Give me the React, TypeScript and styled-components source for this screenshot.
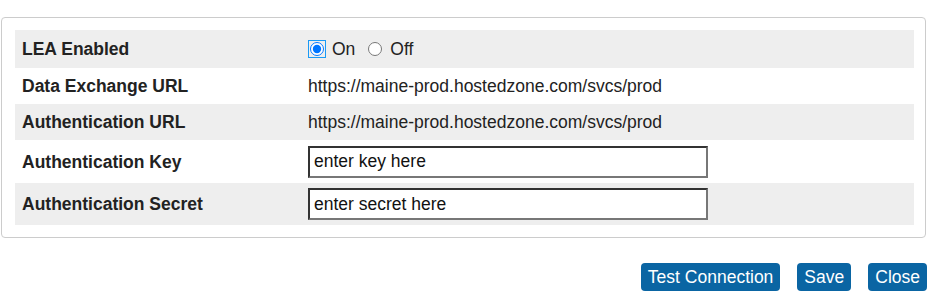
import React from "react";
import styled, { createGlobalStyle } from "styled-components";

const Global = createGlobalStyle`
  html, body { margin: 0; padding: 0; background: #ffffff; }
  body { font-family: "Liberation Sans", Arial, sans-serif; color: #222; }
`;

const Page = styled.div`
  padding: 17px 14px 0 1px;
  width: 925px;
`;

const Panel = styled.div`
  border: 1px solid #cccccc;
  border-radius: 4px;
  padding: 12px 11px 12px 13px;
`;

const Table = styled.div`
  display: flex;
  flex-direction: column;
`;

const Row = styled.div<{ $striped?: boolean; $h: number }>`
  display: grid;
  grid-template-columns: 286px 1fr;
  align-items: center;
  height: ${(p) => p.$h}px;
  background: ${(p) => (p.$striped ? "#eeeeee" : "transparent")};
  padding: 0 7px;
`;

const Label = styled.div`
  font-weight: bold;
  font-size: 17.5px;
  color: #222;
  padding-top: 1px;
`;

const Value = styled.div`
  font-size: 17.5px;
  color: #222;
  padding-top: 1px;
`;

const RadioGroup = styled.div`
  display: flex;
  align-items: center;
  font-size: 17.5px;
  color: #222;
`;

const RadioLabel = styled.label`
  display: inline-flex;
  align-items: center;
  margin-right: 11px;
`;

const Radio = styled.input<{ $focus?: boolean }>`
  width: 14px;
  height: 14px;
  margin: 0 8px 0 2px;
  accent-color: #0075ff;
  outline: ${(p) => (p.$focus ? "1px solid #1a9af5" : "none")};
  outline-offset: 1px;
  border-radius: 0;
`;

const TextInput = styled.input`
  box-sizing: border-box;
  width: 400px;
  height: 32px;
  font-family: "Liberation Sans", Arial, sans-serif;
  font-size: 17.5px;
  color: #111;
  padding: 0 4px;
  border-width: 2px;
  border-style: solid;
  border-color: #333 #777 #777 #333;
  background: #fff;
  &::placeholder { color: #111; opacity: 1; }
`;

const Actions = styled.div`
  display: flex;
  justify-content: flex-end;
  gap: 17px;
  margin-top: 25px;
  margin-right: -1px;
`;

const Button = styled.button`
  height: 28px;
  padding: 0 7px;
  border: none;
  border-radius: 4px;
  background: #0a65a3;
  color: #fff;
  font-family: "Liberation Sans", Arial, sans-serif;
  font-size: 17.5px;
  cursor: pointer;
`;

export default function App() {
  return (
    <Page>
      <Global />
      <Panel>
        <Table>
          <Row $striped $h={38}>
            <Label>LEA Enabled</Label>
            <RadioGroup>
              <RadioLabel>
                <Radio type="radio" name="lea" defaultChecked $focus />
                On
              </RadioLabel>
              <RadioLabel>
                <Radio type="radio" name="lea" />
                Off
              </RadioLabel>
            </RadioGroup>
          </Row>
          <Row $h={36}>
            <Label>Data Exchange URL</Label>
            <Value>https://maine-prod.hostedzone.com/svcs/prod</Value>
          </Row>
          <Row $striped $h={36}>
            <Label>Authentication URL</Label>
            <Value>https://maine-prod.hostedzone.com/svcs/prod</Value>
          </Row>
          <Row $h={43}>
            <Label>Authentication Key</Label>
            <div>
              <TextInput type="text" placeholder="enter key here" />
            </div>
          </Row>
          <Row $striped $h={42}>
            <Label>Authentication Secret</Label>
            <div>
              <TextInput type="text" placeholder="enter secret here" />
            </div>
          </Row>
        </Table>
      </Panel>
      <Actions>
        <Button>Test Connection</Button>
        <Button>Save</Button>
        <Button>Close</Button>
      </Actions>
    </Page>
  );
}
